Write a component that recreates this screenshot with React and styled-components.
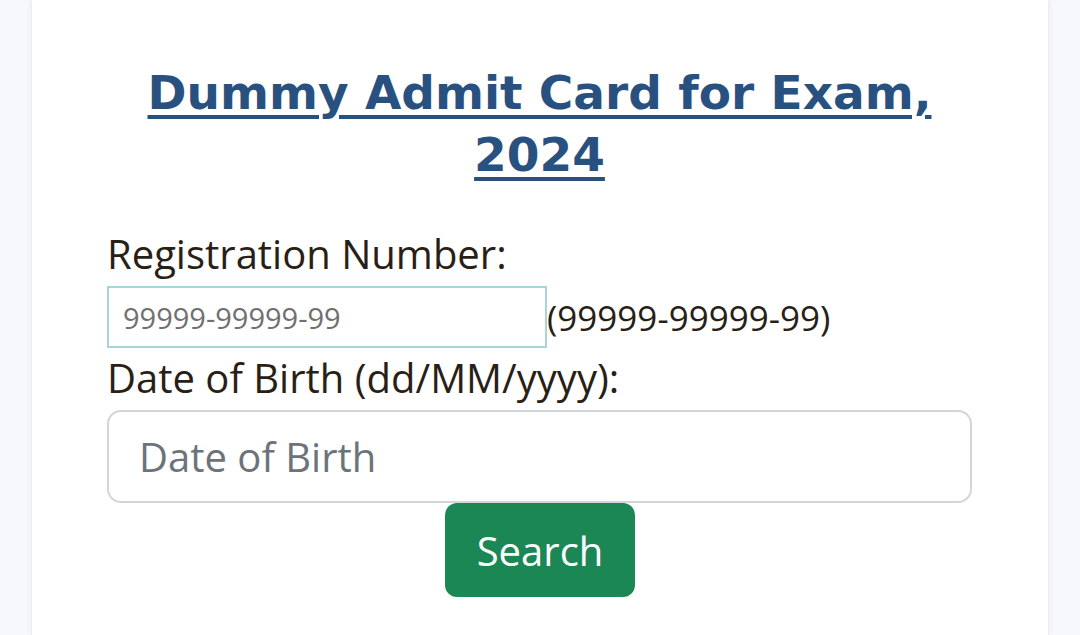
import React, { useState } from "react";
import styled, { createGlobalStyle } from "styled-components";

const GlobalStyle = createGlobalStyle`
  html, body {
    margin: 0;
    padding: 0;
    background: #f7f8fc;
  }
  body {
    font-family: "Open Sans", "Noto Sans", sans-serif;
    color: #2a1f16;
  }
`;

const Page = styled.div`
  height: 635px;
  overflow: hidden;
  padding: 0 32px;
`;

const Card = styled.div`
  background: #ffffff;
  min-height: 635px;
  box-shadow: -1px 0 0 #eceef3, 1px 0 0 #eceef3, -3px 0 4px rgba(0, 0, 0, 0.03),
    3px 0 4px rgba(0, 0, 0, 0.03);
  padding: 62px 76px 0 75px;
  box-sizing: border-box;
`;

const Title = styled.h1`
  margin: 0 0 44px;
  text-align: center;
  font-family: "DejaVu Sans", "Open Sans", sans-serif;
  font-weight: 700;
  font-size: 47px;
  line-height: 62px;
  color: #29517f;
  text-decoration: underline;
  text-decoration-thickness: 4px;
  text-underline-offset: 6px;
`;

const Label = styled.label`
  display: block;
  font-size: 40px;
  line-height: 48px;
  color: #2a1f16;
`;

const InlineRow = styled.div`
  display: flex;
  align-items: center;
  margin: 8px 0 6px;
`;

const RegInput = styled.input`
  width: 440px;
  height: 62px;
  box-sizing: border-box;
  border: 2px solid #a6d5dc;
  border-radius: 0;
  padding: 0 14px;
  font-family: "Open Sans", sans-serif;
  font-size: 29px;
  color: #2a1f16;
  outline: none;
  &::placeholder {
    color: #707070;
  }
`;

const Hint = styled.span`
  font-size: 35px;
  color: #2a1f16;
`;

const DateInput = styled.input`
  display: block;
  width: 100%;
  height: 93px;
  box-sizing: border-box;
  border: 2px solid #d2d5d9;
  border-radius: 14px;
  padding: 0 30px;
  font-family: "Open Sans", sans-serif;
  font-size: 40px;
  color: #2a1f16;
  outline: none;
  margin-top: 8px;
  &::placeholder {
    color: #6c737a;
  }
`;

const ButtonRow = styled.div`
  display: flex;
  justify-content: center;
`;

const SearchButton = styled.button`
  width: 190px;
  height: 94px;
  margin-left: 1px;
  background: #1b8754;
  color: #ffffff;
  border: none;
  border-radius: 12px;
  font-family: "Open Sans", sans-serif;
  font-size: 40px;
  cursor: pointer;
`;

export default function App() {
  const [reg, setReg] = useState("");
  const [dob, setDob] = useState("");
  return (
    <>
      <GlobalStyle />
      <Page>
        <Card>
          <Title>Dummy Admit Card for Exam, 2024</Title>
          <form onSubmit={(e) => e.preventDefault()}>
            <Label htmlFor="reg">Registration Number:</Label>
            <InlineRow>
              <RegInput
                id="reg"
                placeholder="99999-99999-99"
                value={reg}
                onChange={(e) => setReg(e.target.value)}
              />
              <Hint>(99999-99999-99)</Hint>
            </InlineRow>
            <Label htmlFor="dob">Date of Birth (dd/MM/yyyy):</Label>
            <DateInput
              id="dob"
              placeholder="Date of Birth"
              value={dob}
              onChange={(e) => setDob(e.target.value)}
            />
            <ButtonRow>
              <SearchButton type="submit">Search</SearchButton>
            </ButtonRow>
          </form>
        </Card>
      </Page>
    </>
  );
}
